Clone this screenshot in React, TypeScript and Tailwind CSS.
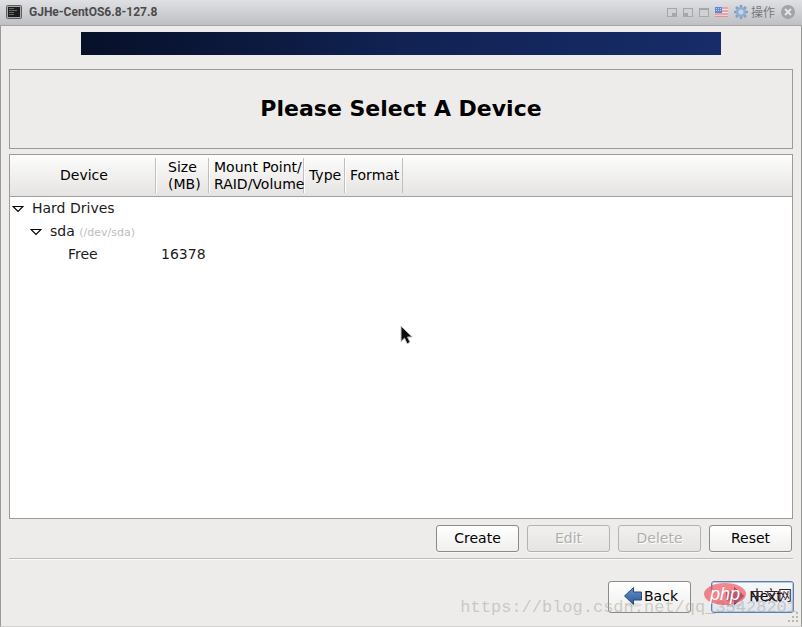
import { ReactNode } from "react";

const columns = [
  { lines: ["Size", "(MB)"], pad: "pl-[11px]" },
  { lines: ["Mount Point/", "RAID/Volume"], pad: "pl-1" },
  { lines: ["Type"], pad: "pl-1" },
  { lines: ["Format"], pad: "pl-1" },
];

const rows = [
  { name: "Hard Drives", indent: "pl-[2px]", open: true },
  { name: "sda", note: "(/dev/sda)", indent: "pl-5", open: true },
  { name: "Free", size: "16378", indent: "pl-[58px]", open: false },
];

function TerminalIcon() {
  return (
    <svg width="16" height="14" viewBox="0 0 16 14" aria-hidden="true">
      <rect x="0.5" y="0.5" width="15" height="13" rx="1" fill="#a9a9a9" stroke="#5f5f5f" />
      <rect x="2" y="2" width="12" height="10" fill="#1d1d1d" />
      <path d="M3 3.500h5M3 5.500h8M3 7.500h5M3 9.500h5" stroke="#696969" />
    </svg>
  );
}

function WindowIcon({ children }: { children?: ReactNode }) {
  return (
    <svg width="10" height="9" viewBox="0 0 10 9" aria-hidden="true">
      <rect x="0.5" y="0.5" width="9" height="8" fill="#d0d1d4" stroke="#a6a7a9" />
      {children}
    </svg>
  );
}

function FlagIcon() {
  return (
    <svg width="13" height="10" viewBox="0 0 13 10" aria-hidden="true">
      <rect width="13" height="10" fill="#efe3e4" />
      <path d="M0 1h13M0 4h13M0 7h13M0 9.500h13" stroke="#e58f91" strokeWidth="1.6" />
      <rect width="7" height="6" fill="#6189d3" />
      <path d="M1 1.500h5M1 3.500h5" stroke="#b9cdf0" strokeDasharray="1 1" />
    </svg>
  );
}

function GearIcon() {
  return (
    <svg width="14" height="14" viewBox="0 0 14 14" aria-hidden="true">
      <path d="M7 0v14M0 7h14M2 2l10 10M12 2L2 12" stroke="#7f9fc6" strokeWidth="2.6" />
      <circle cx="7" cy="7" r="3.8" fill="#d0d3d8" stroke="#8eaed5" strokeWidth="2.6" />
    </svg>
  );
}

function CloseIcon() {
  return (
    <svg width="14" height="14" viewBox="0 0 14 14" aria-hidden="true">
      <circle cx="7" cy="7" r="7" fill="#a2a3a5" />
      <path d="M4 4l6 6M10 4l-6 6" stroke="#e4e5e7" strokeWidth="2" />
    </svg>
  );
}

function ArrowIcon({ className = "" }: { className?: string }) {
  return (
    <svg width="20" height="22" viewBox="0 0 20 22" className={className} aria-hidden="true">
      <defs>
        <linearGradient id="arrow" x1="0" y1="0" x2="0" y2="1">
          <stop offset="0" stopColor="#6390c6" />
          <stop offset="1" stopColor="#2d5a94" />
        </linearGradient>
      </defs>
      <ellipse cx="11" cy="20" rx="8" ry="2" fill="#000" opacity="0.08" />
      <path d="M1.500 11L10.500 2.500v4.500h8v8h-8v4.500z" fill="url(#arrow)" stroke="#254b80" />
    </svg>
  );
}

function ActionButton({ label, disabled }: { label: string; disabled?: boolean }) {
  return (
    <button
      disabled={disabled}
      className="h-[27px] w-[83px] rounded-[3px] border border-[#8c8a87] bg-linear-to-b from-white to-[#f0efee] pb-px text-sm leading-4 shadow-[0_1px_0_#f8f8f7] disabled:border-[#b5b3b0] disabled:from-[#f1f0ef] disabled:to-[#e5e4e2] disabled:text-[#b1afac] disabled:text-shadow-[1px_1px_0_#ffffff]"
    >
      {label}
    </button>
  );
}

function DeviceTable() {
  return (
    <div className="mt-[5px] min-h-[365px] border border-[#9c9a97] bg-white">
      <table className="w-full table-fixed border-separate border-spacing-0 text-sm leading-[17px] text-[#1a1a1a]">
        <colgroup>
          <col className="w-[146px]" />
          <col className="w-[53px]" />
          <col className="w-[95px]" />
          <col className="w-[41px]" />
          <col className="w-[58px]" />
          <col />
        </colgroup>
        <thead>
          <tr className="h-[42px] bg-linear-to-b from-[#fdfdfd] via-[#f1f0ef] to-[#e4e3e1] text-black">
            <th className="border-b border-[#a3a19e] p-0 font-normal">
              <div className="flex h-[35px] items-center justify-center border-r border-[#c1bfbc] pl-[3px]">Device</div>
            </th>
            {columns.map((col) => (
              <th key={col.lines[0]} className="border-b border-[#a3a19e] p-0 text-left font-normal">
                <div
                  className={`flex h-[35px] flex-col justify-center border-r border-l border-r-[#c1bfbc] border-l-white whitespace-nowrap ${col.pad}`}
                >
                  {col.lines.map((line) => (
                    <span key={line} className="block">
                      {line}
                    </span>
                  ))}
                </div>
              </th>
            ))}
            <td className="border-b border-[#a3a19e]" />
          </tr>
        </thead>
        <tbody>
          {rows.map((row) => (
            <tr key={row.name} className="h-[23px]">
              <td className="p-0">
                <div className={`flex items-center whitespace-nowrap ${row.indent}`}>
                  {row.open && (
                    <button aria-label={`Collapse ${row.name}`} className="mr-2 w-3">
                      <svg width="12" height="8" viewBox="0 0 12 8">
                        <path d="M1 1.500h10L6 6.500z" fill="#fff" stroke="#000" strokeWidth="1.200" />
                      </svg>
                    </button>
                  )}
                  <span>
                    {row.name} {row.note && <small className="text-[11px] text-[#bcbcbc]">{row.note}</small>}
                  </span>
                </div>
              </td>
              <td className="p-0 pl-[5px]">{row.size}</td>
              <td colSpan={4} />
            </tr>
          ))}
        </tbody>
      </table>
    </div>
  );
}

export default function App() {
  return (
    <div className="relative flex min-h-screen flex-col border-x border-b border-x-[#999999] border-b-[#d2d1cf] bg-[#edeceb] font-['DejaVu_Sans',sans-serif] text-black">
      {/* Console title bar */}
      <header className="-mx-px flex h-[26px] items-center border-b border-[#a5a5a6] bg-linear-to-b from-[#dfe0e4] to-[#bfc0c3] pr-[7px] pb-px pl-[6px]">
        <TerminalIcon />
        <h1 className="ml-[7px] flex-1 font-[Roboto,sans-serif] text-xs leading-4 font-bold text-[#4a4a4c]">
          GJHe-CentOS6.8-127.8
        </h1>
        <div className="flex items-center gap-[6px]">
          <button aria-label="Minimize">
            <WindowIcon>
              <path d="M5 5h4v3H5z" fill="#a6a7a9" />
            </WindowIcon>
          </button>
          <button aria-label="Restore">
            <WindowIcon>
              <path d="M1 5h4v3H1z" fill="#a6a7a9" />
            </WindowIcon>
          </button>
          <button aria-label="Maximize">
            <WindowIcon>
              <path d="M1 1.500h8" stroke="#a6a7a9" />
            </WindowIcon>
          </button>
          <button aria-label="Keyboard">
            <FlagIcon />
          </button>
          <button className="flex items-center gap-[3px] font-['Noto_Sans_CJK_SC',sans-serif] text-xs leading-4 text-[#77787a]">
            <GearIcon />
            操作
          </button>
          <button aria-label="Close">
            <CloseIcon />
          </button>
        </div>
      </header>

      <div className="mx-20 mt-[6px] h-[23px] bg-linear-to-r from-[#071029] via-[#112253] to-[#172c69]" />

      <main className="mx-2 mt-[14px]">
        <div className="flex h-20 items-center justify-center border border-[#9c9a97]">
          <h2 className="text-[22px] leading-7 font-bold">Please Select A Device</h2>
        </div>
        <DeviceTable />
        <div className="mt-[6px] flex justify-end gap-2 border-b border-[#bdbbb8] pr-px pb-[6px] shadow-[0_1px_0_#fafafa]">
          <ActionButton label="Create" />
          <ActionButton label="Edit" disabled />
          <ActionButton label="Delete" disabled />
          <ActionButton label="Reset" />
        </div>
      </main>

      <footer className="mt-[22px] flex justify-end gap-5 pr-[7px] pb-3">
        <button className="flex h-8 w-[83px] items-center justify-center rounded-[3px] border border-[#8c8a87] bg-linear-to-b from-white to-[#efeeed] pb-[2px] pl-[2px] text-sm leading-4">
          <ArrowIcon />
          <span className="ml-px">Back</span>
        </button>
        <button className="flex h-8 w-[83px] items-center justify-center rounded-[3px] border border-[#5c80ae] bg-linear-to-b from-[#f8fafd] to-[#dce4ef] pb-[2px] pl-[2px] text-sm leading-4 shadow-[inset_0_0_0_1px_#b4c8e0]">
          <ArrowIcon className="-scale-x-100" />
          <span className="ml-1">Next</span>
        </button>
      </footer>

      {/* Marks laid over the console */}
      <div className="pointer-events-none absolute right-1 bottom-[8px] font-['Liberation_Mono',monospace] text-[17px] leading-5 text-[#a8a594]/50">
        https://blog.csdn.net/qq_35428201
      </div>
      <div className="pointer-events-none absolute right-[9px] bottom-[21px] flex items-center gap-1">
        <span className="flex h-[22px] w-[42px] items-center justify-center rounded-[50%] bg-[#f04a50]/65 font-['Liberation_Sans',sans-serif] text-lg leading-5 text-white italic">
          php
        </span>
        <span className="font-['Noto_Sans_CJK_SC',sans-serif] text-sm leading-5 text-[#3e2427]">中文网</span>
      </div>
      <svg
        className="pointer-events-none absolute top-[325px] left-[399px]"
        width="14"
        height="21"
        viewBox="0 0 14 21"
        aria-hidden="true"
      >
        <path d="M1 1v15.500l3.500-3.300 2.700 5.500 2.900-1.400-2.600-5.300h4.800z" fill="#0c0c0c" stroke="#c4c4c4" />
      </svg>
      <svg className="absolute right-[2px] bottom-[3px]" width="12" height="12" viewBox="0 0 12 12" aria-hidden="true">
        <path d="M9 1h2v2H9zM5 5h2v2H5zM9 5h2v2H9zM1 9h2v2H1zM5 9h2v2H5zM9 9h2v2H9z" fill="#bab7a9" />
      </svg>
    </div>
  );
}
